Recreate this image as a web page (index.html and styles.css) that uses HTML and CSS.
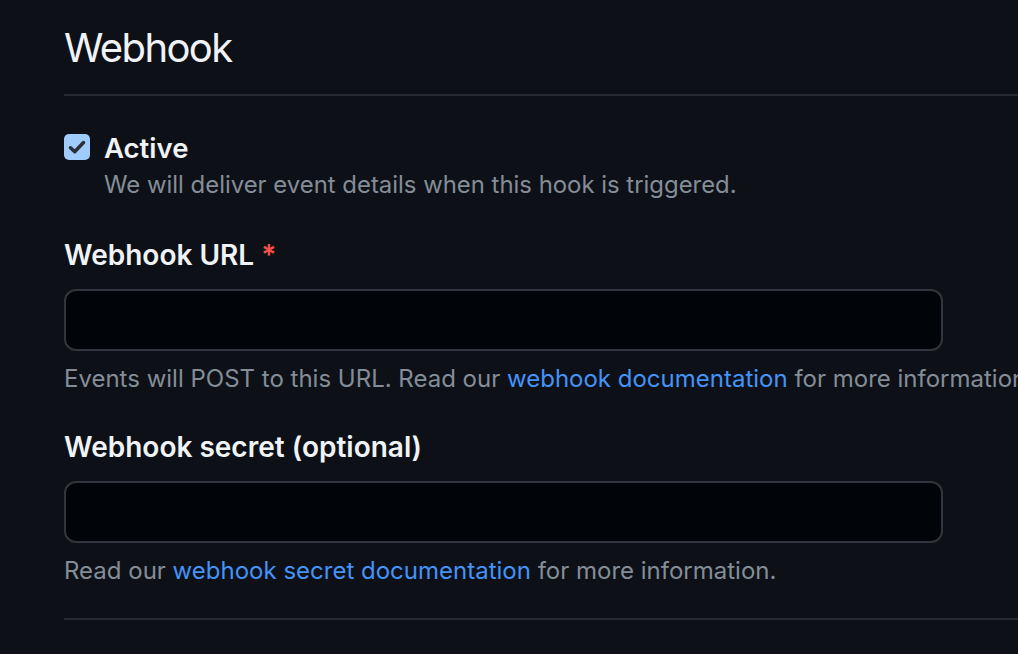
FILE: index.html
```html
<!DOCTYPE html>
<html lang="en">
<head>
<meta charset="utf-8">
<title>Webhook</title>
<link rel="stylesheet" href="styles.css">
</head>
<body>
<main class="page">
  <div class="subhead">
    <h2 class="subhead-heading">Webhook</h2>
  </div>

  <div class="form-checkbox">
    <span class="checkbox" aria-hidden="true">
      <svg viewBox="0 0 16 16" width="20" height="20"><path d="M2.8 8.6 6.2 11.8 13.2 4.4" fill="none" stroke="#2b2f36" stroke-width="2.8" stroke-linecap="round" stroke-linejoin="round"/></svg>
    </span>
    <div class="checkbox-body">
      <label class="checkbox-label">Active</label>
      <p class="note">We will deliver event details when this hook is triggered.</p>
    </div>
  </div>

  <div class="form-group">
    <label class="form-label">Webhook URL <span class="required">*</span></label>
    <input class="form-input" type="text">
    <p class="note">Events will POST to this URL. Read our <a href="#">webhook documentation</a> for more information.</p>
  </div>

  <div class="form-group second">
    <label class="form-label">Webhook secret (optional)</label>
    <input class="form-input" type="text">
    <p class="note">Read our <a href="#">webhook secret documentation</a> for more information.</p>
  </div>

  <div class="divider"></div>
</main>
</body>
</html>
```

FILE: styles.css
```css
html, body {
  margin: 0;
  padding: 0;
  background: #0d1117;
}
body {
  font-family: Inter, "Noto Sans", sans-serif;
  color: #e6edf3;
}
.page {
  padding-left: 64px;
  overflow: hidden;
}
.subhead {
  padding-top: 22px;
  padding-bottom: 20px;
  border-bottom: 2px solid #262b32;
}
.subhead-heading {
  margin: 0;
  font-size: 40px;
  font-weight: 400;
  line-height: 52px;
  letter-spacing: -1.6px;
  color: #f0f3f6;
}
.form-checkbox {
  display: flex;
  gap: 14px;
  margin-top: 38px;
}
.checkbox {
  flex: none;
  width: 26px;
  height: 26px;
  border-radius: 5px;
  background: #9fcbfd;
  display: flex;
  align-items: center;
  justify-content: center;
}
.checkbox-label {
  display: block;
  font-size: 27.5px;
  font-weight: 600;
  line-height: 28px;
  color: #f0f3f6;
}
.note {
  margin: 0;
  font-size: 24px;
  line-height: 30px;
  color: #848d97;
  white-space: nowrap;
}
.checkbox-body .note {
  margin-top: 8px;
  font-size: 23.9px;
}
.form-group {
  margin-top: 39px;
}
.form-group.second {
  margin-top: 37px;
}
.form-label {
  display: block;
  font-size: 28px;
  font-weight: 600;
  line-height: 32px;
  color: #f0f3f6;
}
.required {
  color: #f85149;
  margin-left: 0;
}
.form-input {
  display: block;
  box-sizing: border-box;
  width: 879px;
  height: 62px;
  margin: 18px 0 0;
  background: #010409;
  border: 2px solid #30363d;
  border-radius: 12px;
  outline: none;
}
.form-group .note {
  margin-top: 13px;
}
.note a {
  color: #4493f8;
  text-decoration: none;
}
.divider {
  margin-top: 32px;
  border-top: 2px solid #262b32;
}
```
